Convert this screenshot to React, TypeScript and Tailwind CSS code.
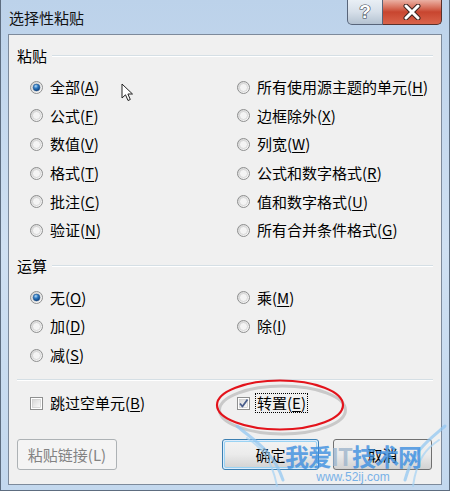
import React from 'react'

const FONT = "font-['Noto_Sans_CJK_SC','Noto_Sans_CJK_JP',sans-serif]"

function Key({ text, k }: { text: string; k: string }) {
  return (
    <span>
      {text}(<span className="underline underline-offset-2">{k}</span>)
    </span>
  )
}

function Radio({ checked }: { checked?: boolean }) {
  return (
    <svg width="13" height="13" viewBox="0 0 13 13" className="shrink-0">
      <defs>
        <linearGradient id="rg-ring" x1="0" y1="0" x2="1" y2="1">
          <stop offset="0" stopColor="#d0d0d0" />
          <stop offset="1" stopColor="#ffffff" />
        </linearGradient>
        <radialGradient id="rg-dot" cx="0.4" cy="0.3" r="0.7">
          <stop offset="0" stopColor="#b9dcf7" />
          <stop offset="0.45" stopColor="#2f7cc4" />
          <stop offset="1" stopColor="#0e3f7a" />
        </radialGradient>
      </defs>
      <circle cx="6.5" cy="6.5" r="6" fill="url(#rg-ring)" stroke="#8e8f8f" />
      <circle cx="6.5" cy="6.5" r="4" fill="#f4f4f4" stroke="#c6c6c6" strokeWidth="0.6" />
      {checked && <circle cx="6.5" cy="6.5" r="3.4" fill="url(#rg-dot)" stroke="#1a4c86" strokeWidth="0.5" />}
    </svg>
  )
}

function Check({ checked }: { checked?: boolean }) {
  return (
    <svg width="13" height="13" viewBox="0 0 13 13" className="shrink-0">
      <defs>
        <linearGradient id="cb-fill" x1="0" y1="0" x2="1" y2="1">
          <stop offset="0" stopColor="#d7d7d7" />
          <stop offset="1" stopColor="#fbfbfb" />
        </linearGradient>
      </defs>
      <rect x="0.5" y="0.5" width="12" height="12" fill="#fff" stroke="#8e8f8f" />
      <rect x="2.5" y="2.5" width="8" height="8" fill="url(#cb-fill)" stroke="#c4c4c4" strokeWidth="0.6" />
      {checked && (
        <path d="M3 6.5 L5.4 9.5 L10.5 2.5" fill="none" stroke="#4a5e8c" strokeWidth="1.8" strokeLinejoin="round" />
      )}
    </svg>
  )
}

function Row({ children, checked }: { children: React.ReactNode; checked?: boolean }) {
  return (
    <div className="h-[28.6px] flex items-center gap-[7px]">
      <Radio checked={checked} />
      <span className="leading-[20px]">{children}</span>
    </div>
  )
}

function Header({ label }: { label: string }) {
  return (
    <div className="h-[20px] flex items-center px-[8px]">
      <span className="leading-[20px]">{label}</span>
      <div className="flex-1 ml-[5px] mr-[0px] border-t border-[#d5dfe5] border-b border-b-white" />
    </div>
  )
}

export default function App() {
  return (
    <div className={`w-[450px] h-[491px] relative overflow-hidden bg-gradient-to-b from-[#bcd2ea] via-[#cfe0f2] to-[#c3d8ee] border-l border-r border-b border-[#5d6d80] text-[15px] text-black ${FONT}`}>
      {/* title bar */}
      <div className="h-[34px] flex items-start">
        <div className="pl-[8px] pt-[8px] text-[15px] leading-[20px] text-[#111]">选择性粘贴</div>
        <div className="flex-1" />
        <div className="flex mr-[7px] h-[25px]">
          <div className="w-[36px] h-full rounded-bl-[5px] border border-t-0 border-[#58657a] bg-gradient-to-b from-[#e9eff5] via-[#d6dfe9] to-[#b4c2d1] flex items-center justify-center">
            <svg width="16" height="20" viewBox="0 0 16 20">
              <text x="8" y="16" textAnchor="middle" fontSize="19" fontWeight="700" fontFamily="Liberation Sans, sans-serif" fill="#fff" stroke="#3a4452" strokeWidth="1.2" paintOrder="stroke">?</text>
            </svg>
          </div>
          <div className="w-[59px] h-full rounded-br-[5px] border border-t-0 border-l-0 border-[#59302a] bg-gradient-to-b from-[#eab1a4] via-[#c8452f] to-[#d9634a] flex items-center justify-center">
            <svg width="20" height="16" viewBox="0 0 20 16">
              <path d="M4 2 L16 14 M16 2 L4 14" stroke="#3b2420" strokeWidth="5" strokeLinecap="round" />
              <path d="M4 2 L16 14 M16 2 L4 14" stroke="#fff" strokeWidth="3" strokeLinecap="round" />
            </svg>
          </div>
        </div>
      </div>

      {/* content */}
      <div className="mx-[7px] h-[451px] border border-[#7d8a9b] bg-[#f0f0f0] flex flex-col">
        <div className="mt-[11px]">
          <Header label="粘贴" />
        </div>
        <div className="mt-[7px] grid grid-cols-[207px_1fr] pl-[21px]">
          <div className="flex flex-col">
            <Row checked><Key text="全部" k="A" /></Row>
            <Row><Key text="公式" k="F" /></Row>
            <Row><Key text="数值" k="V" /></Row>
            <Row><Key text="格式" k="T" /></Row>
            <Row><Key text="批注" k="C" /></Row>
            <Row><Key text="验证" k="N" /></Row>
          </div>
          <div className="flex flex-col">
            <Row><Key text="所有使用源主题的单元" k="H" /></Row>
            <Row><Key text="边框除外" k="X" /></Row>
            <Row><Key text="列宽" k="W" /></Row>
            <Row><Key text="公式和数字格式" k="R" /></Row>
            <Row><Key text="值和数字格式" k="U" /></Row>
            <Row><Key text="所有合并条件格式" k="G" /></Row>
          </div>
        </div>

        <div className="mt-[11px]">
          <Header label="运算" />
        </div>
        <div className="mt-[8px] grid grid-cols-[207px_1fr] pl-[21px]">
          <div className="flex flex-col">
            <Row checked><Key text="无" k="O" /></Row>
            <Row><Key text="加" k="D" /></Row>
            <Row><Key text="减" k="S" /></Row>
          </div>
          <div className="flex flex-col">
            <Row><Key text="乘" k="M" /></Row>
            <Row><Key text="除" k="I" /></Row>
          </div>
        </div>

        <div className="mt-[10px] mx-[8px] border-t border-[#d5dfe5] border-b border-b-white" />

        <div className="mt-[8px] h-[28px] grid grid-cols-[207px_1fr] pl-[21px] items-center">
          <div className="flex items-center gap-[7px]">
            <Check />
            <span className="leading-[20px]"><Key text="跳过空单元" k="B" /></span>
          </div>
          <div className="flex items-center gap-[5px]">
            <Check checked />
            <span className="leading-[18px] border border-dotted border-black px-[1px]"><Key text="转置" k="E" /></span>
          </div>
        </div>

        <div className="mt-[22px] flex items-center pl-[8px]">
          <div className="w-[100px] h-[31px] rounded-[3px] border border-[#adb2b5] bg-[#f4f4f4] text-[#838383] flex items-center justify-center leading-[20px]">
            粘贴链接(L)
          </div>
          <div className="ml-[105px] w-[97px] h-[31px] rounded-[3px] border border-[#3c7fb1] p-[1px] bg-[#dcecfc]">
            <div className="w-full h-full rounded-[2px] border border-[#9ad3f3] bg-gradient-to-b from-[#f2f2f2] via-[#ebebeb] to-[#d4d4d4] flex items-center justify-center leading-[20px]">
              确定
            </div>
          </div>
          <div className="ml-[14px] w-[99px] h-[31px] rounded-[3px] border border-[#707070] bg-gradient-to-b from-[#f2f2f2] via-[#ebebeb] to-[#d2d2d2] flex items-center justify-center leading-[20px]">
            取消
          </div>
        </div>
      </div>

      {/* mouse pointer */}
      <svg className="absolute left-[120px] top-[83px]" width="14" height="20" viewBox="0 0 14 20">
        <path d="M1 1 L1 15 L4.5 11.8 L7 17.5 L9.3 16.5 L6.9 11 L11.5 11 Z" fill="#fff" stroke="#222" strokeWidth="1" strokeLinejoin="round" />
      </svg>

      {/* red highlight ellipse */}
      <svg className="absolute left-[212px] top-[377px]" width="136" height="60" viewBox="0 0 136 60">
        <ellipse cx="68" cy="30" rx="63" ry="24" fill="none" stroke="#c9c9c9" strokeWidth="3" transform="translate(1.5 3)" />
        <ellipse cx="67" cy="28" rx="63" ry="24.5" fill="none" stroke="#e3131b" strokeWidth="2.2" />
      </svg>

      {/* watermark */}
      <svg className="absolute left-[232px] top-[420px] opacity-70" width="218" height="71" viewBox="0 0 218 71">
        <path d="M4 6 C 20 20, 40 30, 50 60" fill="none" stroke="#8fc6f2" strokeWidth="3" strokeLinecap="round" />
        <path d="M14 18 C 26 26, 38 36, 44 66" fill="none" stroke="#a6d3f5" strokeWidth="2" strokeLinecap="round" />
        <path d="M212 6 C 196 20, 180 30, 172 60" fill="none" stroke="#8fc6f2" strokeWidth="3" strokeLinecap="round" />
        <path d="M206 20 C 194 28, 184 38, 180 66" fill="none" stroke="#a6d3f5" strokeWidth="2" strokeLinecap="round" />
      </svg>
      <div className="absolute left-[284px] top-[442px] flex flex-col items-center opacity-80">
        <div className="text-[24px] leading-[28px] font-bold text-[#3d8fe0] tracking-[-1px]">
          我爱<span className="text-[#9fb5cc]">IT</span>技术网
        </div>
        <div className="text-[12px] leading-[14px] text-[#5aa2e6] font-['Liberation_Sans',sans-serif]">www.52ij.com</div>
      </div>
    </div>
  )
}
